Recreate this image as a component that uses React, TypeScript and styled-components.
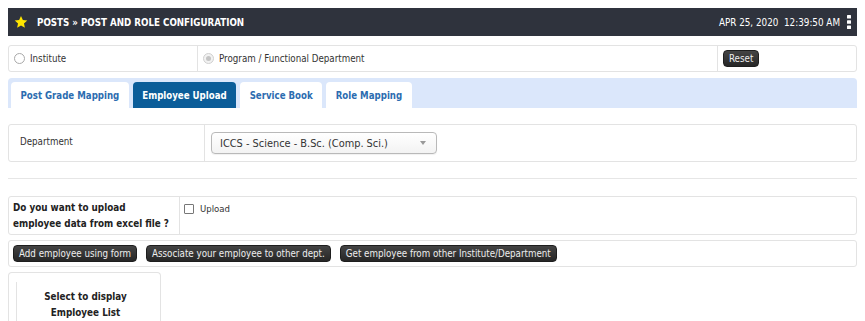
import React from "react";
import styled, { createGlobalStyle } from "styled-components";

const Global = createGlobalStyle`
  html, body { margin: 0; padding: 0; background: #fff; }
  body { font-family: "DejaVu Sans Condensed", "DejaVu Sans", sans-serif; font-size: 9.7px; color: #333; }
  * { box-sizing: border-box; }
`;

const Page = styled.div`
  padding: 8px 8px 0 8px;
  display: flex;
  flex-direction: column;
`;

const Header = styled.div`
  height: 28px;
  background: #2f333d;
  display: flex;
  align-items: center;
  padding: 0 6px 0 6px;
  color: #fff;
`;

const Title = styled.div`
  font-weight: bold;
  font-size: 9.7px;
  margin-left: 9px;
  flex: 1;
`;

const Clock = styled.div`
  font-size: 9.8px;
  white-space: pre;
  margin-right: 7px;
`;

const Box = styled.div<{ $mt?: number; $h: number }>`
  border: 1px solid #e3e3e3;
  border-radius: 3px;
  display: flex;
  height: ${(p) => p.$h}px;
  margin-top: ${(p) => p.$mt ?? 0}px;
  background: #fff;
`;

const Cell = styled.div<{ $w?: number; $grow?: boolean; $pad?: string; $top?: boolean }>`
  ${(p) => (p.$w ? `width: ${p.$w}px; flex: none;` : "")}
  ${(p) => (p.$grow ? "flex: 1;" : "")}
  padding: ${(p) => p.$pad ?? "0 5px"};
  display: flex;
  align-items: ${(p) => (p.$top ? "flex-start" : "center")};
  & + & { border-left: 1px solid #e3e3e3; }
`;

const Radio = styled.span<{ $disabled?: boolean }>`
  width: 11px;
  height: 11px;
  border-radius: 50%;
  border: 1px solid ${(p) => (p.$disabled ? "#d0d0d0" : "#a9a9a9")};
  background: ${(p) => (p.$disabled ? "#f2f2f2" : "#fff")};
  display: inline-flex;
  align-items: center;
  justify-content: center;
  margin-right: 5px;
  &::after {
    content: "";
    display: ${(p) => (p.$disabled ? "block" : "none")};
    width: 5px;
    height: 5px;
    border-radius: 50%;
    background: #c4c4c4;
  }
`;

const Label = styled.span`
  font-size: 9.7px;
  color: #333;
`;

const DarkButton = styled.button`
  font-family: inherit;
  font-size: 9.7px;
  color: #eee;
  background: linear-gradient(#444, #262626);
  border: 1px solid #1e1e1e;
  border-radius: 4px;
  height: 17px;
  padding: 0 5px;
  display: inline-flex;
  align-items: center;
  line-height: 1;
  cursor: pointer;
`;

const TabBar = styled.div`
  margin-top: 6px;
  background: #dbe7fb;
  border-radius: 4px 4px 0 0;
  height: 30px;
  display: flex;
  align-items: flex-end;
  padding-left: 3px;
  gap: 4px;
`;

const Tab = styled.div<{ $active?: boolean }>`
  height: 26px;
  padding: 0 9.5px;
  display: flex;
  align-items: center;
  border-radius: 4px 4px 0 0;
  font-weight: bold;
  font-size: 9.6px;
  color: ${(p) => (p.$active ? "#fff" : "#2c6cb0")};
  background: ${(p) => (p.$active ? "#0b5d99" : "#fff")};
`;

const Select = styled.div`
  width: 226px;
  height: 22px;
  border: 1px solid #b9b9b9;
  border-radius: 4px;
  background: linear-gradient(#fff, #f3f3f3);
  display: flex;
  align-items: center;
  padding: 0 8px;
  font-size: 10.9px;
  color: #333;
  box-shadow: 0 1px 1px rgba(0,0,0,0.06);
`;

const SelectText = styled.span`
  flex: 1;
`;

const Arrow = styled.span`
  width: 0;
  height: 0;
  border-left: 3px solid transparent;
  border-right: 3px solid transparent;
  border-top: 4px solid #999;
  margin-right: 2px;
`;

const Divider = styled.div`
  margin-top: 16px;
  height: 1px;
  background: #e6e6e6;
`;

const Question = styled.div`
  font-weight: bold;
  font-size: 9.8px;
  line-height: 16px;
  color: #222;
`;

const Check = styled.span`
  width: 10px;
  height: 10px;
  border: 1px solid #777;
  border-radius: 1px;
  background: #fff;
  margin-right: 6px;
  flex: none;
`;

const UploadLabel = styled.span`
  font-size: 9.5px;
  line-height: 10px;
  color: #333;
`;

const ButtonRow = styled.div`
  margin-top: 5px;
  border: 1px solid #e3e3e3;
  border-radius: 3px;
  height: 27px;
  display: flex;
  align-items: center;
  padding: 0 4px;
  gap: 9px;
`;

const ListPanel = styled.div`
  margin-top: 5px;
  width: 153px;
  height: 60px;
  border: 1px solid #e3e3e3;
  border-bottom: none;
  border-radius: 4px 4px 0 0;
  padding: 9px 0 0 7px;
  display: flex;
`;

const ListInner = styled.div`
  flex: 1;
  border-left: 1px solid #e3e3e3;
  display: flex;
  flex-direction: column;
  align-items: center;
  padding-top: 7px;
  padding-right: 6px;
  font-weight: bold;
  font-size: 9.8px;
  line-height: 16px;
  color: #222;
`;

const Star = () => (
  <svg width="14" height="14" viewBox="0 0 24 24">
    <path d="M12 1.5l3.2 7 7.6.8-5.7 5.2 1.6 7.5L12 18.2 5.3 22l1.6-7.5L1.2 9.3l7.6-.8z" fill="#ffe600" />
  </svg>
);

const Kebab = () => (
  <svg width="4" height="14" viewBox="0 0 4 14">
    <rect x="0" y="0" width="4" height="3.5" rx="0.5" fill="#fff" />
    <rect x="0" y="5.25" width="4" height="3.5" rx="0.5" fill="#fff" />
    <rect x="0" y="10.5" width="4" height="3.5" rx="0.5" fill="#fff" />
  </svg>
);

export default function App() {
  return (
    <>
      <Global />
      <Page>
        <Header>
          <Star />
          <Title>POSTS » POST AND ROLE CONFIGURATION</Title>
          <Clock>APR 25, 2020  12:39:50 AM</Clock>
          <Kebab />
        </Header>

        <Box $mt={9} $h={27}>
          <Cell $w={188}>
            <Radio />
            <Label>Institute</Label>
          </Cell>
          <Cell $w={520}>
            <Radio $disabled />
            <Label>Program / Functional Department</Label>
          </Cell>
          <Cell $grow>
            <DarkButton>Reset</DarkButton>
          </Cell>
        </Box>

        <TabBar>
          <Tab>Post Grade Mapping</Tab>
          <Tab $active>Employee Upload</Tab>
          <Tab>Service Book</Tab>
          <Tab>Role Mapping</Tab>
        </TabBar>

        <Box $mt={16} $h={38}>
          <Cell $w={195} $pad="0 0 4px 11px">
            <Label>Department</Label>
          </Cell>
          <Cell $grow $pad="0 0 0 6px">
            <Select>
              <SelectText>ICCS - Science - B.Sc. (Comp. Sci.)</SelectText>
              <Arrow />
            </Select>
          </Cell>
        </Box>

        <Divider />

        <Box $mt={17} $h={39}>
          <Cell $w={170} $pad="0 4px">
            <Question>
              Do you want to upload
              <br />
              employee data from excel file ?
            </Question>
          </Cell>
          <Cell $grow $top $pad="7px 4px 0 4px">
            <Check />
            <UploadLabel>Upload</UploadLabel>
          </Cell>
        </Box>

        <ButtonRow>
          <DarkButton>Add employee using form</DarkButton>
          <DarkButton>Associate your employee to other dept.</DarkButton>
          <DarkButton>Get employee from other Institute/Department</DarkButton>
        </ButtonRow>

        <ListPanel>
          <ListInner>
            <span>Select to display</span>
            <span>Employee List</span>
          </ListInner>
        </ListPanel>
      </Page>
    </>
  );
}
